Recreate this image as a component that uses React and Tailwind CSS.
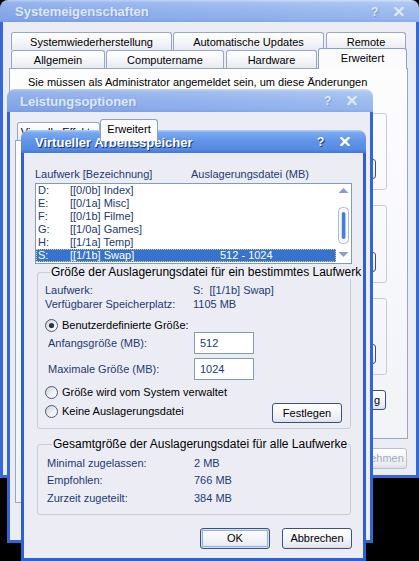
import React from "react";

const ACTIVE_BG =
  "bg-[linear-gradient(to_bottom,#b3d0f8_0%,#78a8f0_12%,#6296e8_45%,#5689e2_85%,#4377d8_100%)]";
const INACTIVE_BG =
  "bg-[linear-gradient(to_right,rgba(70,110,210,0.18),rgba(255,255,255,0.08)),linear-gradient(to_bottom,#cfe0fa_0%,#a7c3f2_12%,#97b7ee_50%,#8fb0ec_85%,#82a5e6_100%)]";

function XGlyph({ color }) {
  return (
    <svg width="10" height="9" viewBox="0 0 10 9" className="shrink-0">
      <path d="M1.5 1 L8.5 8 M8.5 1 L1.5 8" stroke={color} strokeWidth="2.4" strokeLinecap="square" />
    </svg>
  );
}

function Caption({ title, active, className }) {
  const txt = active
    ? "text-white [text-shadow:1px_1px_0_#12327e]"
    : "text-[#dde8fb] [text-shadow:1px_1px_0_#7d9cdc]";
  return (
    <div className={`flex shrink-0 items-center ${active ? ACTIVE_BG : INACTIVE_BG} ${className}`}>
      <span className={`flex-1 whitespace-nowrap pt-[1px] text-[13px] font-bold leading-[15px] ${txt}`}>{title}</span>
      <span className={`w-[7px] pt-[1px] text-[12px] font-bold leading-[14px] ${txt}`}>?</span>
      <span className="ml-[16px]">
        <XGlyph color={active ? "#ffffff" : "#dde8fb"} />
      </span>
    </div>
  );
}

function Btn({ children, className, def, disabled }) {
  const base =
    "flex shrink-0 items-center justify-center rounded-[3px] border bg-[linear-gradient(to_bottom,#ffffff_0%,#f5f6fa_45%,#e9ebf2_85%,#d9dce6_100%)] text-[11px] leading-[13px]";
  const col = disabled ? "border-[#b7bfd1] text-[#a3aabb]" : "border-[#3c5278] text-black";
  const ring = def ? "shadow-[inset_0_0_0_1px_#cfe0fa,inset_0_0_0_2px_#8db2ee]" : "";
  return <div className={`${base} ${col} ${ring} ${className}`}>{children}</div>;
}

function Tab({ children, className }) {
  return (
    <div
      className={`flex h-[18px] shrink-0 items-center justify-center rounded-t-[3px] border border-b-0 border-[#97a6c2] bg-[linear-gradient(to_bottom,#ffffff,#f3f4f8_60%,#e6e9f0)] pt-[1px] text-[11px] leading-[13px] text-black ${className}`}
    >
      {children}
    </div>
  );
}

function SelTab({ children, className }) {
  return (
    <div
      className={`relative z-10 flex shrink-0 items-start justify-center rounded-t-[3px] border border-b-0 border-[#8fa0c2] bg-[#fbfbfd] pt-[3px] text-[11px] leading-[13px] text-black ${className}`}
    >
      {children}
    </div>
  );
}

function Radio({ checked }) {
  return (
    <svg width="13" height="13" viewBox="0 0 13 13" className="shrink-0">
      <defs>
        <linearGradient id={checked ? "rgc" : "rgu"} x1="0" y1="0" x2="1" y2="1">
          <stop offset="0" stopColor="#c9ccd6" />
          <stop offset="0.55" stopColor="#eef0f5" />
          <stop offset="1" stopColor="#ffffff" />
        </linearGradient>
      </defs>
      <circle cx="6.5" cy="6.5" r="6" fill={`url(#${checked ? "rgc" : "rgu"})`} stroke="#4d5870" strokeWidth="1" />
      {checked && <circle cx="6.5" cy="6.5" r="2.6" fill="#2d3545" />}
    </svg>
  );
}

function RadioLabel({ checked, children, className }) {
  return (
    <div className={`flex h-[14px] items-center gap-[4px] whitespace-nowrap text-black ${className}`}>
      <Radio checked={checked} />
      <span>{children}</span>
    </div>
  );
}

function Group({ title, bg, className, children }) {
  return (
    <div className={`flex flex-col rounded-[3px] border border-[#c6cbd8] ${className}`}>
      {title ? (
        <span
          className={`-mt-[8px] ml-[5px] self-start whitespace-nowrap px-[1px] text-[12px] leading-[14px] text-black ${bg}`}
        >
          {title}
        </span>
      ) : null}
      {children}
    </div>
  );
}

function SysWin() {
  return (
    <div className="absolute left-0 top-0 flex h-[478px] w-[419px] flex-col overflow-hidden rounded-t-[8px]">
      <Caption title="Systemeigenschaften" active={false} className="h-[22px] pl-[15px] pr-[15px]" />
      <div className="flex min-h-0 flex-1 flex-col border-x-[3px] border-b-[3px] border-[#3868d6] bg-[#ecedf4]">
        <div className="ml-[8px] mt-[10px] flex flex-col">
          <div className="flex h-[18px] items-end">
            <Tab className="w-[161px]">Systemwiederherstellung</Tab>
            <Tab className="ml-[1px] w-[151px]">Automatische Updates</Tab>
            <Tab className="ml-[2px] w-[80px]">Remote</Tab>
          </div>
          <div className="flex h-[18px] items-start">
            <Tab className="w-[94px]">Allgemein</Tab>
            <Tab className="ml-[1px] w-[118px]">Computername</Tab>
            <Tab className="ml-[2px] w-[91px]">Hardware</Tab>
            <SelTab className="-mt-[2px] ml-[1px] h-[21px] w-[89px]">Erweitert</SelTab>
          </div>
        </div>
        <div className="ml-[6px] flex h-[371px] w-[399px] flex-col border border-[#97a6c2] bg-[linear-gradient(to_bottom,#fdfdfe,#f2f3f7)]">
          <p className="ml-[18px] mt-[7px] h-[26px] text-black">
            Sie müssen als Administrator angemeldet sein, um diese Änderungen
          </p>
          {["mt-[11px] h-[77px]", "mt-[15px] h-[78px]", "mt-[15px] h-[77px]"].map((c) => (
            <Group key={c} className={`ml-[10px] w-[367px] ${c}`}>
              <div className="flex flex-1 items-end justify-end pb-[10px] pr-[10px]">
                <Btn className="h-[20px] w-[75px]" />
              </div>
            </Group>
          ))}
          <div className="mr-[21px] mt-[15px] flex justify-end gap-[6px]">
            <Btn className="h-[20px] w-[112px]" />
            <Btn className="h-[20px] w-[114px] justify-end pr-[5px]">g</Btn>
          </div>
        </div>
        <div className="mr-[9px] mt-[9px] flex justify-end gap-[6px]">
          <Btn def className="h-[21px] w-[70px]" />
          <Btn className="h-[21px] w-[70px]" />
          <Btn disabled className="h-[21px] w-[70px]">Übernehmen</Btn>
        </div>
      </div>
    </div>
  );
}

function LeistWin() {
  return (
    <div className="absolute left-[7px] top-[89px] flex h-[454px] w-[366px] flex-col overflow-hidden rounded-t-[8px]">
      <Caption title="Leistungsoptionen" active={false} className="h-[23px] pl-[13px] pr-[16px]" />
      <div className="flex min-h-0 flex-1 flex-col border-x-[3px] border-b-[3px] border-[#3366d4] bg-[#ecedf4]">
        <div className="ml-[7px] mt-[10px] flex h-[18px] items-start">
          <Tab className="w-[83px]">Visuelle Effekte</Tab>
          <SelTab className="-mt-[3px] h-[22px] w-[58px]">Erweitert</SelTab>
        </div>
        <div className="ml-[5px] h-[363px] w-[350px] border border-[#97a6c2] bg-[linear-gradient(to_bottom,#fdfdfe,#f2f3f7)]" />
        <div className="mr-[6px] mt-[10px] flex justify-end gap-[6px]">
          <Btn def className="h-[21px] w-[70px]" />
          <Btn className="h-[21px] w-[70px]" />
          <Btn className="h-[21px] w-[70px]" />
        </div>
      </div>
    </div>
  );
}

const DRIVES = [
  ["D:", "[[0/0b] Index]", ""],
  ["E:", "[[0/1a] Misc]", ""],
  ["F:", "[[0/1b] Filme]", ""],
  ["G:", "[[1/0a] Games]", ""],
  ["H:", "[[1/1a] Temp]", ""],
  ["S:", "[[1/1b] Swap]", "512 - 1024"],
];

function Scrollbar() {
  return (
    <svg width="15" height="79" viewBox="0 0 15 79" className="shrink-0">
      <path d="M2.5 9 L7.5 4 L12.5 9 Z" fill="#8d9fc6" />
      <rect x="2.5" y="23.5" width="10" height="36" rx="4" fill="#f7f9fd" stroke="#aabbdb" />
      <rect x="5.8" y="28" width="3.6" height="27" rx="1.8" fill="#4a7cdb" />
      <path d="M2.5 68 L12.5 68 L7.5 73 Z" fill="#8d9fc6" />
    </svg>
  );
}

function VirtWin() {
  const navy = "text-[#1c3a74]";
  return (
    <div className="absolute left-[21px] top-[130px] flex h-[431px] w-[345px] flex-col overflow-hidden rounded-t-[8px]">
      <Caption title="Virtueller Arbeitsspeicher" active className="h-[23px] pl-[14px] pr-[16px]" />
      <div className="flex min-h-0 flex-1 flex-col overflow-hidden border-x-[3px] border-b-[3px] border-[#2f60d2] bg-[#ecedf4] px-[11px] pt-[15px]">
        <div className={`flex h-[13px] ${navy}`}>
          <span className="w-[156px]">Laufwerk [Bezeichnung]</span>
          <span>Auslagerungsdatei (MB)</span>
        </div>
        <div className="mt-[2px] flex h-[81px] border border-[#7f9db9] bg-white">
          <div className="flex w-[300px] flex-col">
            {DRIVES.map(([l, n, v], i) => {
              const sel = i === DRIVES.length - 1;
              return (
                <div
                  key={l}
                  className={
                    sel
                      ? "flex h-[13px] items-center bg-[#3772cf] text-white outline-1 -outline-offset-1 outline-dotted outline-[#d9d66a]"
                      : `flex h-[13px] items-center ${navy}`
                  }
                >
                  <span className="w-[34px] pl-[2px]">{l}</span>
                  <span className="w-[150px] whitespace-nowrap">{n}</span>
                  <span>{v}</span>
                </div>
              );
            })}
          </div>
          <Scrollbar />
        </div>

        <Group
          title="Größe der Auslagerungsdatei für ein bestimmtes Laufwerk"
          bg="bg-[#ecedf4]"
          className="ml-[2px] mr-[1px] mt-[8px] pb-[5px] pl-[7px] pr-[8px]"
        >
          <div className={`mt-[4px] flex h-[14px] items-center ${navy}`}>
            <span className="w-[148px]">Laufwerk:</span>
            <span className="whitespace-pre">S:  [[1/1b] Swap]</span>
          </div>
          <div className={`flex h-[14px] items-center ${navy}`}>
            <span className="w-[148px]">Verfügbarer Speicherplatz:</span>
            <span>1105 MB</span>
          </div>
          <RadioLabel checked className="mt-[7px]">Benutzerdefinierte Größe:</RadioLabel>
          <div className={`flex h-[22px] items-center ${navy}`}>
            <span className="ml-[3px] w-[146px]">Anfangsgröße (MB):</span>
            <div className="flex h-[22px] w-[60px] items-center border border-[#7f9db9] bg-white pl-[5px]">512</div>
          </div>
          <div className={`mt-[4px] flex h-[22px] items-center ${navy}`}>
            <span className="ml-[3px] w-[146px]">Maximale Größe (MB):</span>
            <div className="flex h-[22px] w-[60px] items-center border border-[#7f9db9] bg-white pl-[5px]">1024</div>
          </div>
          <RadioLabel className="mt-[5px]">Größe wird vom System verwaltet</RadioLabel>
          <div className="mt-[2px] flex h-[22px] items-start">
            <RadioLabel className="mt-[3px]">Keine Auslagerungsdatei</RadioLabel>
            <Btn className="ml-auto mt-[2px] h-[20px] w-[70px]">Festlegen</Btn>
          </div>
        </Group>

        <Group
          title="Gesamtgröße der Auslagerungsdatei für alle Laufwerke"
          bg="bg-[#ecedf4]"
          className={`ml-[2px] mr-[1px] mt-[15px] pb-[9px] pl-[9px] ${navy}`}
        >
          <div className="mt-[5px] flex h-[14px] items-center">
            <span className="w-[147px]">Minimal zugelassen:</span>
            <span>2 MB</span>
          </div>
          <div className="mt-[3px] flex h-[14px] items-center">
            <span className="w-[147px]">Empfohlen:</span>
            <span>766 MB</span>
          </div>
          <div className="mt-[4px] flex h-[14px] items-center">
            <span className="w-[147px]">Zurzeit zugeteilt:</span>
            <span>384 MB</span>
          </div>
        </Group>

        <div className="mt-[13px] flex justify-end gap-[12px]">
          <Btn def className="h-[21px] w-[70px]">OK</Btn>
          <Btn className="h-[21px] w-[70px]">Abbrechen</Btn>
        </div>
      </div>
    </div>
  );
}

export default function App() {
  return (
    <div className="relative h-[561px] w-[419px] overflow-hidden bg-black font-['Liberation_Sans',Arial,sans-serif] text-[11px] leading-[13px]">
      <SysWin />
      <LeistWin />
      <VirtWin />
    </div>
  );
}
